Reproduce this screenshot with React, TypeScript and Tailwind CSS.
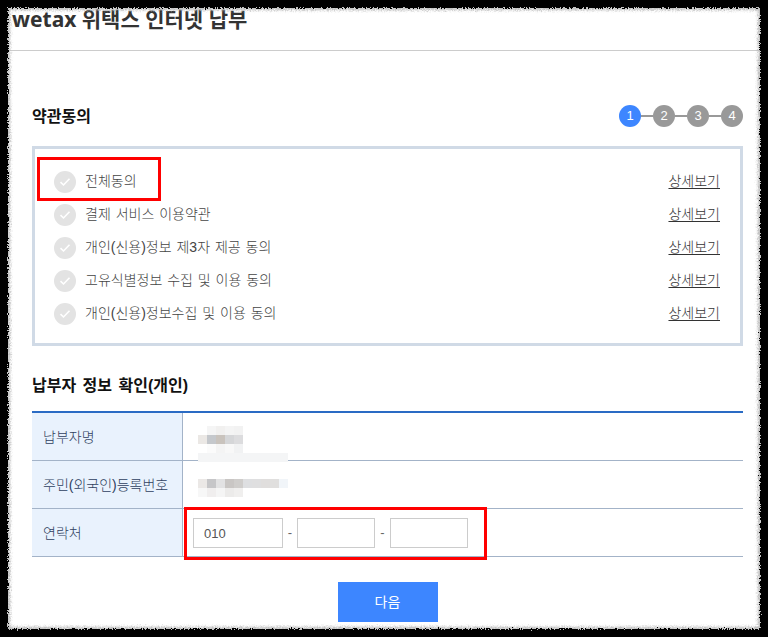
import React from "react";

const terms = [
    "결제 서비스 이용약관",
    "개인(신용)정보 제3자 제공 동의",
    "고유식별정보 수집 및 이용 동의",
    "개인(신용)정보수집 및 이용 동의",
];

const steps = ["1", "2", "3", "4"];

// blurred out personal data, one row of pixels per entry
const nameCells = [
    ["bg-white", "bg-[#f5f5f5]", "bg-[#f1f0ef]", "bg-[#f4f4f4]", "bg-[#f2f2f2]"],
    ["bg-[#ebe8e5]", "bg-[#c5c8cc]", "bg-[#c9c3bd]", "bg-[#d5d6d8]", "bg-[#dcdcde]"],
    ["bg-white", "bg-[#fbfbfb]", "bg-[#f4f4f4]", "bg-[#f8f8f8]", "bg-[#f1f2f3]"],
    ["bg-[#f4f5f6]", "bg-[#f4f5f6]", "bg-[#f4f5f6]", "bg-[#f4f5f6]", "bg-[#f4f5f6]", "bg-[#f4f5f6]", "bg-[#f4f5f6]", "bg-[#f4f5f6]", "bg-[#f4f5f6]", "bg-[#f4f5f6]"],
];

const idCells = [
    ["bg-[#ebe8e6]", "bg-[#c6c6c8]", "bg-[#e2e2e3]", "bg-[#c9c6c4]", "bg-[#cfcdcb]", "bg-[#dedfe1]", "bg-[#dfdfe0]", "bg-[#e0dedd]", "bg-[#e0dfde]", "bg-[#f1f5f9]"],
    ["bg-[#f7f7f7]", "bg-[#f0eeee]", "bg-[#f5f5f5]", "bg-[#ecebea]", "bg-[#f0efee]"],
];

const Mosaic = ({ rows }: { rows: string[][] }) => (
    <div className="relative z-10 flex flex-col">
        {rows.map((row, i) => (
            <div key={i} className="flex h-[9px]">
                {row.map((color, j) => (
                    <div key={j} className={`h-[9px] w-[9px] ${color}`} />
                ))}
            </div>
        ))}
    </div>
);

const CheckCircle = () => (
    <span className="flex h-[22px] w-[22px] shrink-0 items-center justify-center rounded-full bg-[#e3e3e3]">
        <svg width="12" height="10" viewBox="0 0 12 10" fill="none">
            <path d="M1.5 5.2 L4.5 8 L10.5 1.8" stroke="#ffffff" strokeWidth="1.6" />
        </svg>
    </span>
);

const TermRow = ({ label }: { label: string }) => (
    <div className="flex h-[33px] items-center justify-between pl-[19px] pr-[20px]">
        <div className="flex items-center gap-[9px]">
            <CheckCircle />
            <span className="text-[14px] font-light text-[#444444] [word-spacing:1px]">{label}</span>
        </div>
        <a className="text-[14px] font-light text-[#333333] underline underline-offset-2">상세보기</a>
    </div>
);

const InfoRow = ({ label, children }: { label: string; children: React.ReactNode }) => (
    <div className="flex h-[48px] border-b border-[#a3b3c8]">
        <div className="flex w-[151px] shrink-0 items-center border-r border-[#a3b3c8] bg-[#e9f2fd] pl-[11px] pt-[2px] text-[14px] font-light text-[#2f3f60]">
            {label}
        </div>
        {children}
    </div>
);

const App: React.FC = () => {
    return (
        <div className="relative h-[637px] w-[768px] overflow-hidden bg-white font-['Liberation_Sans','Noto_Sans_CJK_KR',sans-serif]">
            <svg width="0" height="0" className="absolute">
                <filter id="torn" x="-2%" y="-2%" width="104%" height="104%">
                    <feTurbulence type="fractalNoise" baseFrequency="0.7" numOctaves="2" seed="4" />
                    <feDisplacementMap in="SourceGraphic" scale="5" />
                </filter>
            </svg>

            {/* header */}
            <div className="h-[51px] border-b border-[#cccccc] pl-[12px] pt-[4px] font-['Noto_Sans','Noto_Sans_CJK_KR',sans-serif] text-[21px] font-bold leading-[30px] text-[#333333]">
                wetax 위택스 인터넷 납부
            </div>

            <div className="pl-[32px] pr-[25px]">
                {/* terms */}
                <div className="mt-[53px] flex h-[23px] items-center justify-between">
                    <h2 className="relative top-[1px] text-[16px] font-bold text-[#111111]">약관동의</h2>
                    <div className="flex items-center">
                        {steps.map((step, i) => (
                            <React.Fragment key={step}>
                                {i > 0 && <span className="h-[2px] w-[12px] bg-[#999999]" />}
                                <span
                                    className={`flex h-[22px] w-[22px] items-center justify-center rounded-full text-[13px] text-white ${
                                        i === 0 ? "bg-[#3d86ff]" : "bg-[#999999]"
                                    }`}
                                >
                                    {step}
                                </span>
                            </React.Fragment>
                        ))}
                    </div>
                </div>

                <div className="relative mt-[19px] h-[200px] border-[3px] border-[#d0dae6] pt-[16px]">
                    <TermRow label="전체동의" />
                    {terms.map((term) => (
                        <TermRow key={term} label={term} />
                    ))}
                    <div className="pointer-events-none absolute left-[2px] top-[8px] h-[44px] w-[124px] border-[3px] border-[#ff0000]" />
                </div>

                {/* payer info */}
                <h2 className="mt-[29px] text-[16px] font-bold leading-[22px] text-[#111111] [word-spacing:2px]">납부자 정보 확인(개인)</h2>

                <div className="relative mt-[14px] border-t-2 border-[#2a6bc4]">
                    <InfoRow label="납부자명">
                        <div className="pl-[15px] pt-[13px]">
                            <Mosaic rows={nameCells} />
                        </div>
                    </InfoRow>
                    <InfoRow label="주민(외국인)등록번호">
                        <div className="pl-[15px] pt-[18px]">
                            <Mosaic rows={idCells} />
                        </div>
                    </InfoRow>
                    <InfoRow label="연락처">
                        <div className="flex items-center pl-[10px] text-[13px] text-[#666666]">
                            <input
                                defaultValue="010"
                                className="h-[30px] w-[90px] border border-[#cccccc] px-[10px] pt-[2px] text-[13px] text-[#555555]"
                            />
                            <span className="w-[14px] text-center">-</span>
                            <input className="h-[30px] w-[78px] border border-[#cccccc]" />
                            <span className="w-[15px] text-center">-</span>
                            <input className="h-[30px] w-[78px] border border-[#cccccc]" />
                        </div>
                    </InfoRow>
                    <div className="pointer-events-none absolute left-[152px] top-[94px] h-[53px] w-[303px] border-[3px] border-[#ff0000]" />
                </div>

                <div className="mt-[25px] flex justify-center">
                    <button className="h-[40px] w-[100px] bg-[#3d86ff] text-[14px] text-white">다음</button>
                </div>
            </div>

            {/* torn paper edge of the capture */}
            <div className="pointer-events-none absolute -inset-[3px] z-20 rounded-[6px] border-[11px] border-black shadow-[inset_0_0_3px_2px_#bbbbbb] [filter:url(#torn)]" />
        </div>
    );
};

export default App;
